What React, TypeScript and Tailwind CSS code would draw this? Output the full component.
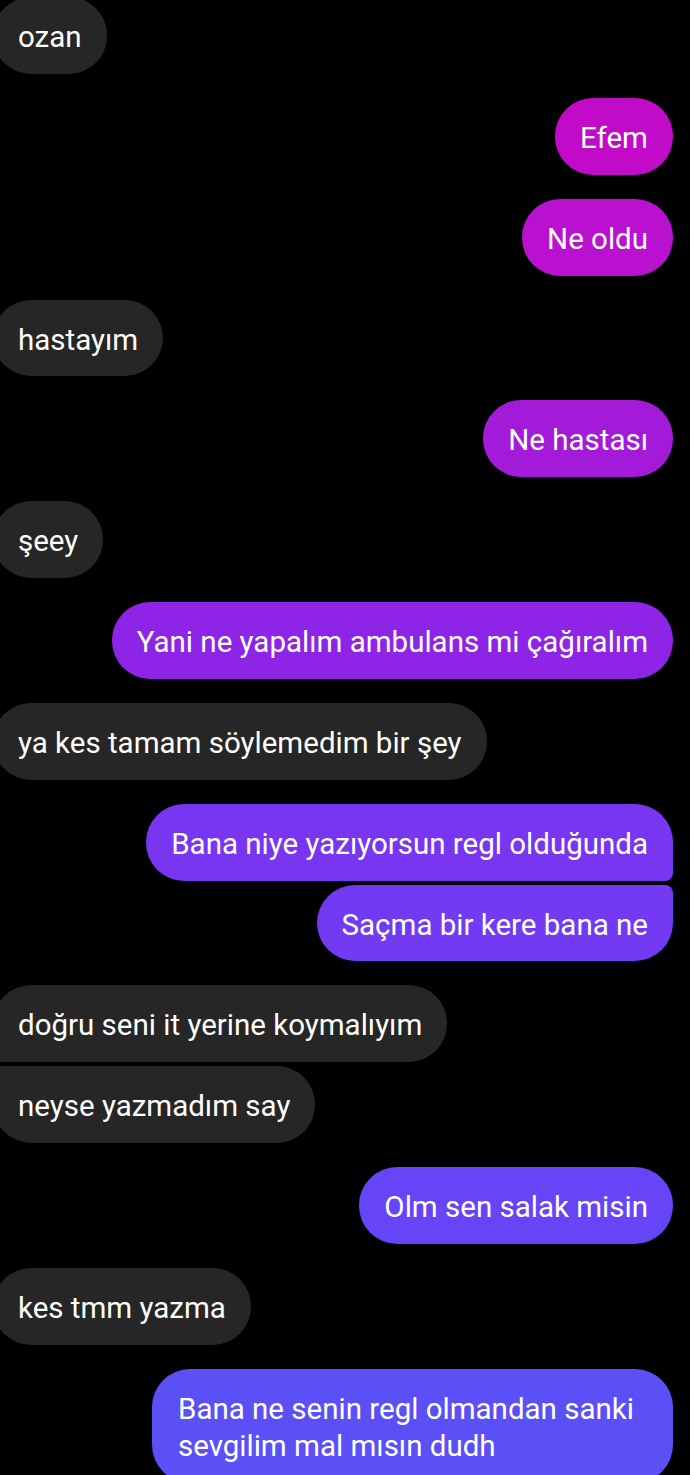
type Msg = { text: string; me: boolean; color?: string; pos?: "top" | "bottom" | "single"; wide?: boolean };

const messages: Msg[] = [
  { text: "ozan", me: false },
  { text: "Efem", me: true, color: "bg-[#c20bc9]" },
  { text: "Ne oldu", me: true, color: "bg-[#b911cf]" },
  { text: "hastayım", me: false },
  { text: "Ne hastası", me: true, color: "bg-[#a31ad9]" },
  { text: "şeey", me: false },
  { text: "Yani ne yapalım ambulans mi çağıralım", me: true, color: "bg-[#8e25e6]" },
  { text: "ya kes tamam söylemedim bir şey", me: false },
  { text: "Bana niye yazıyorsun regl olduğunda", me: true, color: "bg-[#7836f1]", pos: "top" },
  { text: "Saçma bir kere bana ne", me: true, color: "bg-[#723af2]", pos: "bottom" },
  { text: "doğru seni it yerine koymalıyım", me: false, pos: "top" },
  { text: "neyse yazmadım say", me: false, pos: "bottom" },
  { text: "Olm sen salak misin", me: true, color: "bg-[#6545f5]" },
  { text: "kes tmm yazma", me: false },
  { text: "Bana ne senin regl olmandan sanki sevgilim mal mısın dudh", me: true, color: "bg-[#5b50f6]", wide: true },
];

function Bubble({ m, first }: { m: Msg; first: boolean }) {
  const pos = m.pos ?? "single";
  const mt = first ? "mt-[-3px]" : pos === "bottom" ? "mt-[4px]" : "mt-[24px]";
  if (m.me) {
    const corners =
      pos === "top" ? "rounded-[38px] rounded-br-[8px]" : pos === "bottom" ? "rounded-[38px] rounded-tr-[8px]" : "rounded-[38px]";
    return (
      <div className={`flex justify-end pr-[17px] ${mt}`}>
        <div className={`${m.color} ${corners} ${m.wide ? "w-[521px] pl-[26px] pr-[25px]" : "px-[25px]"} pt-[22px] pb-[18px] text-white`}>
          {m.text}
        </div>
      </div>
    );
  }
  const corners =
    pos === "top" ? "rounded-[38px] rounded-bl-[8px]" : pos === "bottom" ? "rounded-[38px] rounded-tl-[8px]" : "rounded-[38px]";
  return (
    <div className={`flex justify-start ${mt}`}>
      <div className={`bg-[#262626] ${corners} ml-[-7px] pl-[25px] pr-[25px] pt-[22px] pb-[18px] text-white`}>{m.text}</div>
    </div>
  );
}

export default function App() {
  return (
    <div
      className="w-[690px] h-[1475px] overflow-hidden bg-black text-[29.5px] leading-[36.85px]"
      style={{ fontFamily: "Roboto, 'Noto Sans', sans-serif" }}
    >
      {messages.map((m, i) => (
        <Bubble key={i} m={m} first={i === 0} />
      ))}
    </div>
  );
}
